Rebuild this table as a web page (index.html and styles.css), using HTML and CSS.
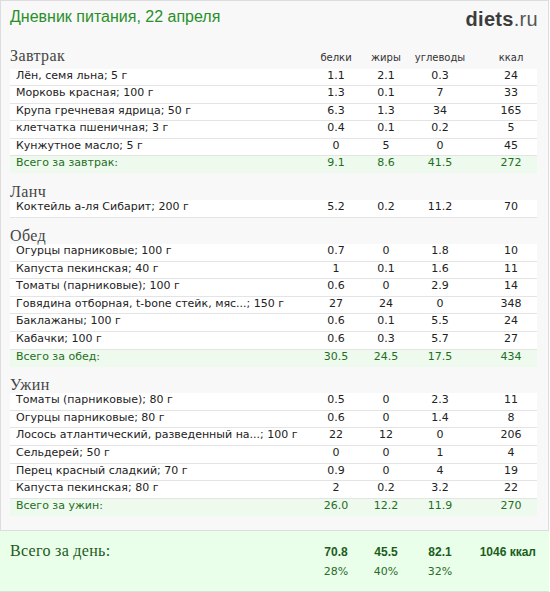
FILE: index.html
```html
<!DOCTYPE html>
<html lang="ru">
<head>
<meta charset="utf-8">
<title>Дневник питания</title>
<link rel="stylesheet" href="styles.css">
</head>
<body>
<div class="page">
  <header class="top">
    <h1 class="title">Дневник питания, 22 апреля</h1>
    <div class="logo"><b>diets</b>.ru</div>
  </header>

  <section class="meal">
    <div class="head head-labels"><h2>Завтрак</h2><span class="c">белки</span><span class="c">жиры</span><span class="c">углеводы</span><span class="c k">ккал</span></div>
    <div class="row"><span class="name">Лён, семя льна; 5 г</span><span class="c">1.1</span><span class="c">2.1</span><span class="c">0.3</span><span class="c k">24</span></div>
    <div class="row"><span class="name">Морковь красная; 100 г</span><span class="c">1.3</span><span class="c">0.1</span><span class="c">7</span><span class="c k">33</span></div>
    <div class="row"><span class="name">Крупа гречневая ядрица; 50 г</span><span class="c">6.3</span><span class="c">1.3</span><span class="c">34</span><span class="c k">165</span></div>
    <div class="row"><span class="name">клетчатка пшеничная; 3 г</span><span class="c">0.4</span><span class="c">0.1</span><span class="c">0.2</span><span class="c k">5</span></div>
    <div class="row"><span class="name">Кунжутное масло; 5 г</span><span class="c">0</span><span class="c">5</span><span class="c">0</span><span class="c k">45</span></div>
    <div class="row total"><span class="name">Всего за завтрак:</span><span class="c">9.1</span><span class="c">8.6</span><span class="c">41.5</span><span class="c k">272</span></div>
  </section>

  <section class="meal">
    <div class="head"><h2>Ланч</h2></div>
    <div class="row"><span class="name">Коктейль а-ля Сибарит; 200 г</span><span class="c">5.2</span><span class="c">0.2</span><span class="c">11.2</span><span class="c k">70</span></div>
  </section>

  <section class="meal">
    <div class="head"><h2>Обед</h2></div>
    <div class="row"><span class="name">Огурцы парниковые; 100 г</span><span class="c">0.7</span><span class="c">0</span><span class="c">1.8</span><span class="c k">10</span></div>
    <div class="row"><span class="name">Капуста пекинская; 40 г</span><span class="c">1</span><span class="c">0.1</span><span class="c">1.6</span><span class="c k">11</span></div>
    <div class="row"><span class="name">Томаты (парниковые); 100 г</span><span class="c">0.6</span><span class="c">0</span><span class="c">2.9</span><span class="c k">14</span></div>
    <div class="row"><span class="name">Говядина отборная, t-bone стейк, мяс...; 150 г</span><span class="c">27</span><span class="c">24</span><span class="c">0</span><span class="c k">348</span></div>
    <div class="row"><span class="name">Баклажаны; 100 г</span><span class="c">0.6</span><span class="c">0.1</span><span class="c">5.5</span><span class="c k">24</span></div>
    <div class="row"><span class="name">Кабачки; 100 г</span><span class="c">0.6</span><span class="c">0.3</span><span class="c">5.7</span><span class="c k">27</span></div>
    <div class="row total"><span class="name">Всего за обед:</span><span class="c">30.5</span><span class="c">24.5</span><span class="c">17.5</span><span class="c k">434</span></div>
  </section>

  <section class="meal">
    <div class="head"><h2>Ужин</h2></div>
    <div class="row"><span class="name">Томаты (парниковые); 80 г</span><span class="c">0.5</span><span class="c">0</span><span class="c">2.3</span><span class="c k">11</span></div>
    <div class="row"><span class="name">Огурцы парниковые; 80 г</span><span class="c">0.6</span><span class="c">0</span><span class="c">1.4</span><span class="c k">8</span></div>
    <div class="row"><span class="name">Лосось атлантический, разведенный на...; 100 г</span><span class="c">22</span><span class="c">12</span><span class="c">0</span><span class="c k">206</span></div>
    <div class="row"><span class="name">Сельдерей; 50 г</span><span class="c">0</span><span class="c">0</span><span class="c">1</span><span class="c k">4</span></div>
    <div class="row"><span class="name">Перец красный сладкий; 70 г</span><span class="c">0.9</span><span class="c">0</span><span class="c">4</span><span class="c k">19</span></div>
    <div class="row"><span class="name">Капуста пекинская; 80 г</span><span class="c">2</span><span class="c">0.2</span><span class="c">3.2</span><span class="c k">22</span></div>
    <div class="row total"><span class="name">Всего за ужин:</span><span class="c">26.0</span><span class="c">12.2</span><span class="c">11.9</span><span class="c k">270</span></div>
  </section>

  <footer class="day">
    <div class="day-label">Всего за день:</div>
    <span class="c sum">70.8</span><span class="c sum">45.5</span><span class="c sum">82.1</span><span class="kcal sum">1046 ккал</span>
    <span class="day-gap"></span><span class="c pct">28%</span><span class="c pct">40%</span><span class="c pct">32%</span><span></span>
  </footer>
</div>
</body>
</html>
```

FILE: styles.css
```css
* { box-sizing: border-box; }

html, body {
  margin: 0;
  padding: 0;
  background: #ffffff;
}

.page {
  width: 549px;
  border: 1px solid #dddddd;
  border-bottom: none;
  background: #f8f8f8;
  font-family: "DejaVu Sans", Verdana, sans-serif;
  font-size: 11px;
  color: #222222;
}

.top {
  display: flex;
  justify-content: space-between;
  align-items: flex-start;
  height: 36px;
  padding: 6px 10px 0 9px;
}

.title {
  margin: 0;
  font-family: "Liberation Sans", Arial, sans-serif;
  font-weight: normal;
  font-size: 16px;
  line-height: 20px;
  color: #2a8f2a;
}

.logo {
  font-family: "Liberation Sans", Arial, sans-serif;
  font-size: 20px;
  line-height: 24px;
  color: #555555;
  letter-spacing: 0.3px;
}

.logo b {
  color: #3c3c3c;
}

.meal {
  margin: 9.5px 11px 0 9px;
}

.head,
.row {
  display: grid;
  grid-template-columns: 1fr 50px 50px 58px 68px;
}

.head {
  align-items: baseline;
  line-height: 17px;
}

.head-labels {
  padding-bottom: 3px;
}

.head h2 {
  margin: 0;
  font-family: "Liberation Serif", Georgia, serif;
  font-weight: normal;
  font-size: 16px;
  letter-spacing: 0.4px;
  color: #454545;
}

.head .c {
  font-size: 10px;
  color: #333333;
}

.c {
  text-align: center;
}

.k {
  padding-left: 16px;
}

.row {
  background: #ffffff;
  line-height: 14px;
  padding-bottom: 2.6px;
  border-bottom: 1px solid #e4e4e4;
}

.name {
  padding-left: 6px;
  white-space: nowrap;
  overflow: hidden;
}

.row.total {
  background: #eefaee;
  color: #1f6e1f;
  border-bottom: none;
  padding-bottom: 3px;
}

.day {
  display: grid;
  grid-template-columns: 1fr 50px 50px 58px 68px;
  grid-auto-rows: 20px;
  align-content: start;
  margin: 14px -1px 0;
  height: 62px;
  padding: 10px 12px 0 10px;
  background: #eaffea;
  border-top: 1px solid #dddddd;
  border-bottom: 1px solid #dddddd;
}

.day-label {
  font-family: "Liberation Serif", Georgia, serif;
  font-size: 16px;
  letter-spacing: 0.3px;
  line-height: 20px;
  color: #1b5a1b;
}

.sum {
  font-family: "Liberation Sans", Arial, sans-serif;
  font-weight: bold;
  font-size: 12px;
  line-height: 20px;
  padding-top: 1px;
  color: #1b5e1b;
}

.kcal {
  text-align: right;
  padding-right: 1px;
}

.pct {
  line-height: 20px;
  padding-top: 1px;
  color: #2a6a2a;
}
```
